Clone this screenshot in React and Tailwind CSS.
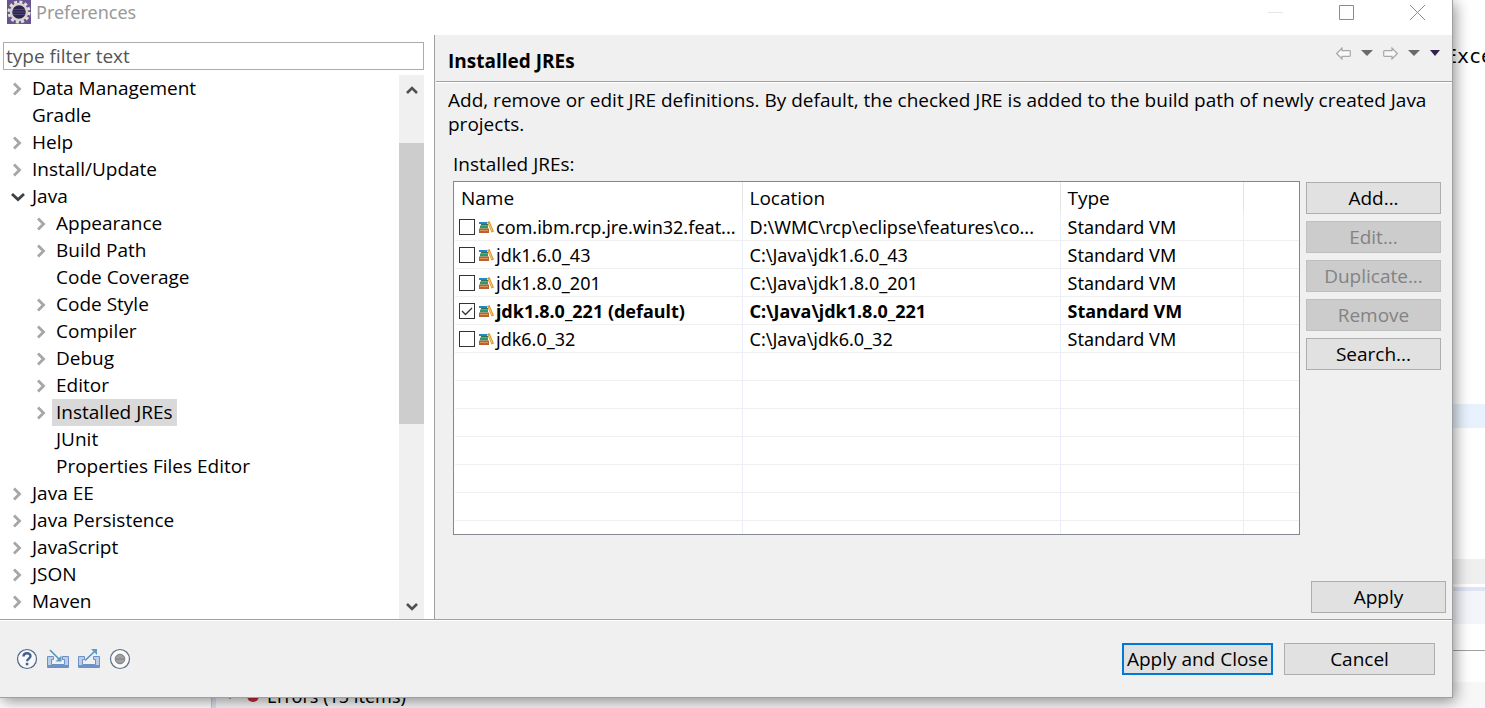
import { useState } from 'react';
import { clsx } from 'clsx';

const TREE = [
  { label: 'Data Management', arrow: 'closed' },
  { label: 'Gradle' },
  { label: 'Help', arrow: 'closed' },
  { label: 'Install/Update', arrow: 'closed' },
  { label: 'Java', arrow: 'open' },
  { label: 'Appearance', arrow: 'closed', child: true },
  { label: 'Build Path', arrow: 'closed', child: true },
  { label: 'Code Coverage', child: true },
  { label: 'Code Style', arrow: 'closed', child: true },
  { label: 'Compiler', arrow: 'closed', child: true },
  { label: 'Debug', arrow: 'closed', child: true },
  { label: 'Editor', arrow: 'closed', child: true },
  { label: 'Installed JREs', arrow: 'closed', child: true },
  { label: 'JUnit', child: true },
  { label: 'Properties Files Editor', child: true },
  { label: 'Java EE', arrow: 'closed' },
  { label: 'Java Persistence', arrow: 'closed' },
  { label: 'JavaScript', arrow: 'closed' },
  { label: 'JSON', arrow: 'closed' },
  { label: 'Maven', arrow: 'closed' },
];

const JRES = [
  { name: 'com.ibm.rcp.jre.win32.feat...', location: 'D:\\WMC\\rcp\\eclipse\\features\\co...' },
  { name: 'jdk1.6.0_43', location: 'C:\\Java\\jdk1.6.0_43' },
  { name: 'jdk1.8.0_201', location: 'C:\\Java\\jdk1.8.0_201' },
  { name: 'jdk1.8.0_221', location: 'C:\\Java\\jdk1.8.0_221' },
  { name: 'jdk6.0_32', location: 'C:\\Java\\jdk6.0_32' },
];

const EMPTY_ROWS = [0, 1, 2, 3, 4, 5];

function EclipseIcon() {
  return (
    <svg width="24" height="24" viewBox="0 0 24 24" className="shrink-0">
      <rect width="24" height="24" fill="#66538f" />
      <circle cx="12" cy="12" r="10" fill="none" stroke="#e4e0d8" strokeWidth="3" strokeDasharray="3 2.24" />
      <circle cx="12" cy="12" r="8" fill="#2c2350" stroke="#d6d2cf" strokeWidth="2.5" />
      <path d="M6 9.500h12M5.500 12h13M6 14.500h12" stroke="#50487a" />
    </svg>
  );
}

function TreeArrow({ state }) {
  if (state === 'open') {
    return (
      <svg width="14" height="14" viewBox="0 0 14 14">
        <path d="M1 4 7 9.500 13 4" fill="none" stroke="#404040" strokeWidth="2.8" />
      </svg>
    );
  }
  return (
    <svg width="14" height="14" viewBox="0 0 14 14">
      <path d="M3 1.500 8.500 7 3 12.500" fill="none" stroke="#a6a6a6" strokeWidth="2.8" />
    </svg>
  );
}

function ScrollArrow({ up }) {
  return (
    <svg width="12" height="10" viewBox="0 0 12 10">
      <path d={up ? 'M1 8 6 3l5 5' : 'M1 2l5 5 5-5'} fill="none" stroke="#505050" strokeWidth="2.6" />
    </svg>
  );
}

function LibraryIcon() {
  return (
    <svg width="15" height="12" viewBox="0 0 15 12" className="shrink-0">
      <path d="M0 1h8v2H0z" fill="#1e88c8" />
      <path d="M2 3h7v1.500H2z" fill="#2f6f5c" />
      <path d="M1 4.500h8v3H1z" fill="#2e9a6c" />
      <path d="M0 7.500h10v4.500H0z" fill="#b8622f" />
      <path d="M1 9h8v1H1z" fill="#dc9560" />
      <path d="M8 1 10.500 0 15 10.500 12.500 11.500z" fill="#e0982c" />
      <path d="m10 2.500 3.200 7.500" stroke="#f4cc7c" />
    </svg>
  );
}

function NavArrow({ right }) {
  return (
    <svg width="15" height="13" viewBox="0 0 15 13">
      <path
        d={right ? 'M14.300 6.500 9 1v2.700H1.500Q.7 3.700.7 4.500v4q0 .8.8.8H9V12z' : 'M.7 6.500 6 1v2.700h7.500q.8 0 .8.8v4q0 .8-.8.800H6V12z'}
        fill="#f8f8f8"
        stroke="#a8a8a8"
        strokeWidth="1.200"
      />
    </svg>
  );
}

function Triangle({ small }) {
  return (
    <svg width={small ? 10 : 12} height="6" viewBox="0 0 12 6" preserveAspectRatio="none">
      <path d="M0 0h12L6 6z" fill={small ? '#33234d' : '#6a6a6e'} />
    </svg>
  );
}

function HelpIcon() {
  return (
    <svg width="22" height="22" viewBox="0 0 22 22">
      <circle cx="11" cy="11" r="9.500" fill="#f6f8fb" stroke="#4f6684" strokeWidth="1.200" />
      <path d="M7.500 8.500c0-4.200 7-4.200 7-.4 0 2.600-3.400 2.500-3.400 5.200" fill="none" stroke="#46608c" strokeWidth="2.400" />
      <rect x="9.800" y="14.800" width="2.500" height="2.500" fill="#46608c" />
    </svg>
  );
}

function TrayIcon({ out }) {
  return (
    <svg width="22" height="22" viewBox="0 0 22 22">
      <path d="M.5 8.500h6v3h-2v5h13v-5h-2v-3h6v11H.5z" fill="#bccde6" stroke="#6f90c4" />
      <path d="M1 17h20v2.500H1z" fill="#6f92c6" />
      <path d={out ? 'M7 12.500 17 3' : 'M3 2 13 12'} stroke="#4b93c3" strokeWidth="1.500" />
      <path d={out ? 'M13 1h6v6z' : 'M14.500 7.500v6H8.500z'} fill="#5a9dca" />
    </svg>
  );
}

function RecordIcon() {
  return (
    <svg width="22" height="22" viewBox="0 0 22 22">
      <circle cx="11" cy="11" r="9.500" fill="#fafafa" stroke="#5d7089" strokeWidth="1.200" />
      <circle cx="11" cy="11" r="4.800" fill="#a0a0a0" stroke="#7c7c7c" />
      <path d="M7 11h8" stroke="#808080" />
    </svg>
  );
}

function Button({ children, disabled, primary, className }) {
  return (
    <button
      type="button"
      disabled={disabled}
      className={clsx(
        'flex h-8 items-center justify-center whitespace-nowrap',
        primary ? 'border-2 border-[#0078d7] bg-[#e1e1e1]' : 'border',
        !primary && (disabled ? 'border-[#bfbfbf] bg-[#cccccc] text-[#838383]' : 'border-[#adadad] bg-[#e1e1e1]'),
        className
      )}
    >
      {children}
    </button>
  );
}

// Parts of the workbench that show around the dialog
function Workbench() {
  return (
    <div className="absolute inset-0 flex flex-col overflow-hidden bg-white">
      <div className="flex h-[404px] shrink-0 justify-end pt-11">
        <span className="w-10 font-['DejaVu_Sans_Mono',monospace] text-[20px] leading-6 whitespace-pre">Exce</span>
      </div>
      <div className="h-6 shrink-0 bg-[#e8f2fe]" />
      <div className="h-[131px] shrink-0" />
      <div className="h-[25px] shrink-0 bg-[#efefef]" />
      <div className="mt-[3px] h-1 shrink-0 bg-[#dfe4f5]" />
      <div className="h-[33px] shrink-0 bg-[#f4f5fb]" />
      <div className="h-[27px] shrink-0 border-b border-[#a0a0a0]" />
      <div className="h-[31px] shrink-0" />
      <div className="flex min-h-7 grow">
        <div className="w-[211px]" />
        <div className="w-[5px] border-l border-[#c4c8d4] bg-[#dde3f3]" />
        <div className="flex h-7 grow items-center gap-2 bg-[#f7f7f7] pl-[9px] font-['Noto_Sans',sans-serif] text-[18px]">
          <Triangle small />
          <span className="ml-1 size-3 rounded-full bg-[#c8283c]" />
          <span>Errors (15 items)</span>
        </div>
      </div>
    </div>
  );
}

function TitleBar() {
  return (
    <header className="flex h-[35px] shrink-0 justify-between bg-white">
      <div className="flex h-6 items-center gap-[5px] pl-[7px]">
        <EclipseIcon />
        <h1 className="font-['Noto_Sans',sans-serif] text-[18px] text-[#999999]">Preferences</h1>
      </div>
      <div className="flex h-6 items-center gap-[54px] pr-[26px]">
        <button type="button" aria-label="Minimize">
          <svg width="17" height="17" viewBox="0 0 17 17"><path d="M1 8.500h15" stroke="#e6e6e6" /></svg>
        </button>
        <button type="button" aria-label="Maximize">
          <svg width="17" height="17" viewBox="0 0 17 17"><path d="M1.500 1.500h14v14h-14z" fill="none" stroke="#8c8c8c" /></svg>
        </button>
        <button type="button" aria-label="Close">
          <svg width="17" height="17" viewBox="0 0 17 17"><path d="m1 1 15 15M16 1 1 16" stroke="#8c8c8c" /></svg>
        </button>
      </div>
    </header>
  );
}

function Sidebar() {
  const [selected, setSelected] = useState('Installed JREs');

  return (
    <aside className="flex w-[435px] shrink-0 flex-col border-r border-[#a0a0a0] bg-white pt-[7px] pr-[10px]">
      <input
        type="text"
        aria-label="Filter"
        placeholder="type filter text"
        className="ml-[3px] h-7 border border-[#ababab] px-[2px] outline-none placeholder:text-[#555555]"
      />
      <div className="mt-[5px] flex grow">
        <ul className="grow">
          {TREE.map((item) => (
            <li key={item.label} className={clsx('flex h-[27px] items-center', item.child ? 'pl-[35px]' : 'pl-[11px]')}>
              <span className="w-[17px]">{item.arrow && <TreeArrow state={item.arrow} />}</span>
              <button
                type="button"
                onClick={() => setSelected(item.label)}
                className={clsx('h-[27px] px-1 pb-0.5', item.label === selected && 'bg-[#d9d9d9]')}
              >
                {item.label}
              </button>
            </li>
          ))}
        </ul>
        <div className="flex w-[25px] flex-col items-center bg-[#f0f0f0] pt-2.5 pb-[7px]">
          <ScrollArrow up />
          <div className="mt-12 h-[281px] w-full bg-[#cdcdcd]" />
          <div className="grow" />
          <ScrollArrow />
        </div>
      </div>
    </aside>
  );
}

function JreTable() {
  const [checked, setChecked] = useState('jdk1.8.0_221');

  return (
    <div className="h-[354px] min-w-0 grow overflow-hidden border border-[#828790] bg-white pl-px">
      <table className="w-full table-fixed border-collapse text-left whitespace-nowrap">
        <colgroup>
          <col className="w-[287px]" />
          <col className="w-[318px]" />
          <col className="w-[183px]" />
          <col />
        </colgroup>
        <thead>
          <tr className="h-[30px]">
            <th className="border-r border-[#e5e5e5] pt-0.5 pl-1.5 font-normal">Name</th>
            <th className="border-r border-[#e5e5e5] pt-0.5 pl-[7px] font-normal">Location</th>
            <th className="border-r border-[#e5e5e5] pt-0.5 pl-[7px] font-normal">Type</th>
            <th />
          </tr>
        </thead>
        <tbody className="font-['Noto_Sans',sans-serif] text-[18px]">
          {JRES.map((jre) => {
            const isDefault = jre.name === checked;
            return (
              <tr key={jre.name} className={clsx('h-7 border-b border-[#f0f0f0]', isDefault && 'font-bold')}>
                <td className="border-r border-[#e9eefa] pt-0.5 pl-1">
                  <label className="flex items-center">
                    <input
                      type="checkbox"
                      checked={isDefault}
                      onChange={() => setChecked(jre.name)}
                      className="peer size-4 shrink-0 appearance-none border border-[#333333] bg-white"
                    />
                    <svg width="16" height="16" viewBox="0 0 16 16" className="invisible -ml-4 shrink-0 peer-checked:visible">
                      <path d="m3 8 3.500 3.500L13 5" fill="none" stroke="#333" strokeWidth="1.300" />
                    </svg>
                    <span className="ml-1 flex items-center gap-[2px]">
                      <LibraryIcon />
                      {jre.name}{isDefault && ' (default)'}
                    </span>
                  </label>
                </td>
                <td className="border-r border-[#e9eefa] pt-0.5 pl-[7px]">{jre.location}</td>
                <td className="border-r border-[#e9eefa] pt-0.5 pl-[7px]">Standard VM</td>
                <td />
              </tr>
            );
          })}
          {EMPTY_ROWS.map((row) => (
            <tr key={row} className="h-7 border-b border-[#f0f0f0]">
              <td className="border-r border-[#e9eefa]" />
              <td className="border-r border-[#e9eefa]" />
              <td className="border-r border-[#e9eefa]" />
              <td />
            </tr>
          ))}
          <tr className="h-4">
            <td className="border-r border-[#e9eefa]" />
            <td className="border-r border-[#e9eefa]" />
            <td className="border-r border-[#e9eefa]" />
            <td />
          </tr>
        </tbody>
      </table>
    </div>
  );
}

function JrePage() {
  return (
    <main className="flex min-w-0 grow flex-col pl-px">
      <div className="flex h-[47px] shrink-0 justify-between border-b border-[#a0a0a0] pr-3 pl-3 shadow-[0_1px_0_#ffffff]">
        <h2 className="pt-3.5 leading-6 font-bold">Installed JREs</h2>
        <div className="flex h-9 items-center gap-2.5">
          <button type="button" aria-label="Back"><NavArrow /></button>
          <button type="button" aria-label="Back history"><Triangle /></button>
          <button type="button" aria-label="Forward"><NavArrow right /></button>
          <button type="button" aria-label="Forward history"><Triangle /></button>
          <button type="button" aria-label="View menu"><Triangle small /></button>
        </div>
      </div>
      <p className="px-3 pt-1.5">
        Add, remove or edit JRE definitions. By default, the checked JRE is added to the build path of newly created Java projects.
      </p>
      <h3 className="mt-4 pl-[17px]">Installed JREs:</h3>
      <div className="mt-[5px] flex gap-1.5 pr-[11px] pl-[17px]">
        <JreTable />
        <div className="flex w-[135px] shrink-0 flex-col gap-[7px] pt-px">
          <Button>Add...</Button>
          <Button disabled>Edit...</Button>
          <Button disabled>Duplicate...</Button>
          <Button disabled>Remove</Button>
          <Button>Search...</Button>
        </div>
      </div>
      <div className="mt-auto flex justify-end pr-1.5 pb-1.5">
        <Button className="w-[135px]">Apply</Button>
      </div>
    </main>
  );
}

function Footer() {
  return (
    <footer className="flex h-[78px] shrink-0 items-center justify-between border-t border-[#a0a0a0] pr-[17px] pl-4 shadow-[inset_0_1px_0_#ffffff]">
      <div className="flex items-center gap-[9px]">
        <button type="button" aria-label="Help"><HelpIcon /></button>
        <button type="button" aria-label="Import"><TrayIcon /></button>
        <button type="button" aria-label="Export"><TrayIcon out /></button>
        <button type="button" aria-label="Record"><RecordIcon /></button>
      </div>
      <div className="flex gap-[11px]">
        <Button primary className="w-[151px]">Apply and Close</Button>
        <Button className="w-[151px]">Cancel</Button>
      </div>
    </footer>
  );
}

export default function App() {
  return (
    <div className="relative flex min-h-screen pr-8 pb-2.5 font-['Open_Sans','Noto_Sans',sans-serif] text-[19px] leading-6 text-black">
      <Workbench />
      <div className="relative flex min-w-0 grow flex-col border-r border-b border-[#a0a0a0] bg-[#f0f0f0] shadow-[2px_3px_14px_rgba(0,0,0,0.45)]">
        <TitleBar />
        <div className="flex grow">
          <Sidebar />
          <JrePage />
        </div>
        <Footer />
      </div>
    </div>
  );
}
